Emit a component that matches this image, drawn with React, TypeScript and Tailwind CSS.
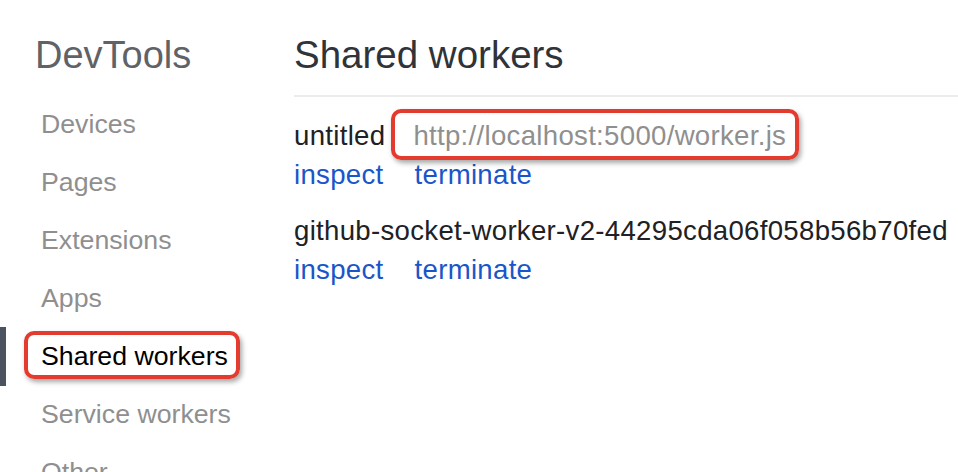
const navItems = ['Devices', 'Pages', 'Extensions', 'Apps', 'Shared workers', 'Service workers', 'Other'];

const workers = [
  { name: 'untitled', url: 'http://localhost:5000/worker.js' },
  { name: 'github-socket-worker-v2-44295cda06f058b56b70fed', url: '' },
];

export default function App() {
  return (
    <div
      className="flex h-[472px] w-[958px] overflow-hidden bg-white"
      style={{ fontFamily: '"Liberation Sans", Arial, sans-serif' }}
    >
      {/* sidebar */}
      <aside className="w-[294px] shrink-0 pt-[33px]">
        <h1 className="pl-[35px] text-[38px] leading-[44px] text-[#5f6368]">DevTools</h1>
        <nav className="mt-[18px]">
          {navItems.map(item => {
            const selected = item === 'Shared workers';
            return (
              <div key={item} className="relative flex h-[58px] items-center">
                {selected && <div className="absolute left-0 top-0 h-[59px] w-[6px] bg-[#4b5360]" />}
                <span
                  className={`relative ml-[41px] whitespace-nowrap text-[26.7px] leading-[32px] ${
                    selected ? 'text-black' : 'text-[#8f8f8f]'
                  }`}
                >
                  {item}
                  {/* red annotation outline */}
                  {selected && (
                    <span className="pointer-events-none absolute -left-[17px] -right-[12px] -top-[9px] -bottom-[7px] rounded-[10px] border-[4px] border-[#e33b2e] shadow-[2px_3px_5px_rgba(0,0,0,0.35)]" />
                  )}
                </span>
              </div>
            );
          })}
        </nav>
      </aside>

      {/* main */}
      <main className="min-w-0 flex-1 pt-[33px]">
        <h2 className="text-[38.5px] leading-[44px] text-[#303338]">Shared workers</h2>
        <div className="mt-[18px] h-[2px] bg-[#ececec]" />
        <div className="mt-[19px] flex flex-col gap-[17px]">
          {workers.map(w => (
            <div key={w.name} className="text-[27.6px] leading-[39px] tracking-[0.3px]">
              <div className="whitespace-nowrap text-[#202124]">
                {w.name}
                {w.url && (
                  <span className="relative ml-[28px] text-[#8f8f8f]">
                    {w.url}
                    <span className="pointer-events-none absolute -left-[22px] -right-[13px] -top-[11px] -bottom-[9px] rounded-[10px] border-[4px] border-[#e33b2e] shadow-[2px_3px_5px_rgba(0,0,0,0.35)]" />
                  </span>
                )}
              </div>
              <div className="flex gap-[31px] text-[#1a56c9]">
                <span>inspect</span>
                <span>terminate</span>
              </div>
            </div>
          ))}
        </div>
      </main>
    </div>
  );
}
